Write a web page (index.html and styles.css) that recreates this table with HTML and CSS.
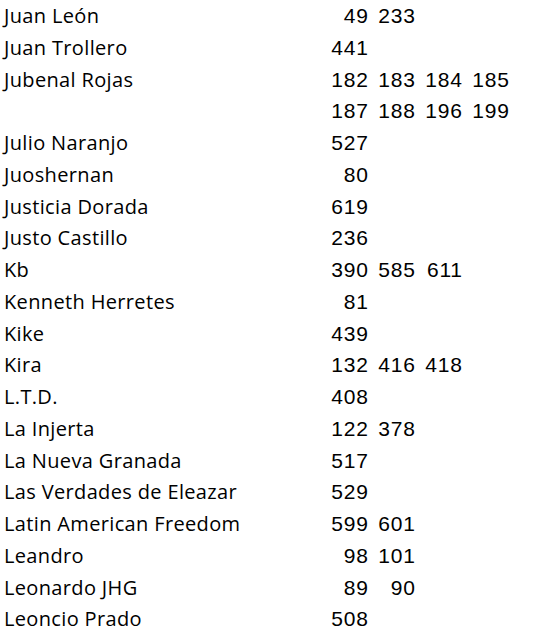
FILE: index.html
```html
<!DOCTYPE html>
<html lang="es">
<head>
<meta charset="utf-8">
<title>Índice</title>
<link rel="stylesheet" href="styles.css">
</head>
<body>
<div class="index">
  <div class="row"><div class="name">Juan León</div><div class="nums"><span>49</span><span>233</span></div></div>
  <div class="row"><div class="name">Juan Trollero</div><div class="nums"><span>441</span></div></div>
  <div class="row"><div class="name">Jubenal Rojas</div><div class="nums"><span>182</span><span>183</span><span>184</span><span>185</span><span>187</span><span>188</span><span>196</span><span>199</span></div></div>
  <div class="row"><div class="name">Julio Naranjo</div><div class="nums"><span>527</span></div></div>
  <div class="row"><div class="name">Juoshernan</div><div class="nums"><span>80</span></div></div>
  <div class="row"><div class="name">Justicia Dorada</div><div class="nums"><span>619</span></div></div>
  <div class="row"><div class="name">Justo Castillo</div><div class="nums"><span>236</span></div></div>
  <div class="row"><div class="name">Kb</div><div class="nums"><span>390</span><span>585</span><span>611</span></div></div>
  <div class="row"><div class="name">Kenneth Herretes</div><div class="nums"><span>81</span></div></div>
  <div class="row"><div class="name">Kike</div><div class="nums"><span>439</span></div></div>
  <div class="row"><div class="name">Kira</div><div class="nums"><span>132</span><span>416</span><span>418</span></div></div>
  <div class="row"><div class="name">L.T.D.</div><div class="nums"><span>408</span></div></div>
  <div class="row"><div class="name">La Injerta</div><div class="nums"><span>122</span><span>378</span></div></div>
  <div class="row"><div class="name">La Nueva Granada</div><div class="nums"><span>517</span></div></div>
  <div class="row"><div class="name">Las Verdades de Eleazar</div><div class="nums"><span>529</span></div></div>
  <div class="row"><div class="name">Latin American Freedom</div><div class="nums"><span>599</span><span>601</span></div></div>
  <div class="row"><div class="name">Leandro</div><div class="nums"><span>98</span><span>101</span></div></div>
  <div class="row"><div class="name">Leonardo JHG</div><div class="nums"><span>89</span><span>90</span></div></div>
  <div class="row"><div class="name">Leoncio Prado</div><div class="nums"><span>508</span></div></div>
</div>
</body>
</html>
```
FILE: styles.css
```css
html, body {
  margin: 0;
  padding: 0;
  background: #ffffff;
}
body {
  color: #000000;
}
.index {
  display: flex;
  flex-direction: column;
  padding: 0 0 0 4px;
}
.row {
  display: flex;
  align-items: flex-start;
}
.name {
  width: 317px;
  flex: none;
  font-family: "Open Sans", sans-serif;
  font-size: 20px;
  letter-spacing: 0.35px;
  line-height: 31.75px;
}
.nums {
  display: grid;
  grid-template-columns: repeat(4, 47px);
  grid-auto-rows: 31.75px;
  font-family: "Liberation Sans", Arial, sans-serif;
  font-size: 21px;
  line-height: 31.75px;
}
.nums span {
  text-align: right;
  letter-spacing: 0.8px;
  margin-right: -0.8px;
}
```
